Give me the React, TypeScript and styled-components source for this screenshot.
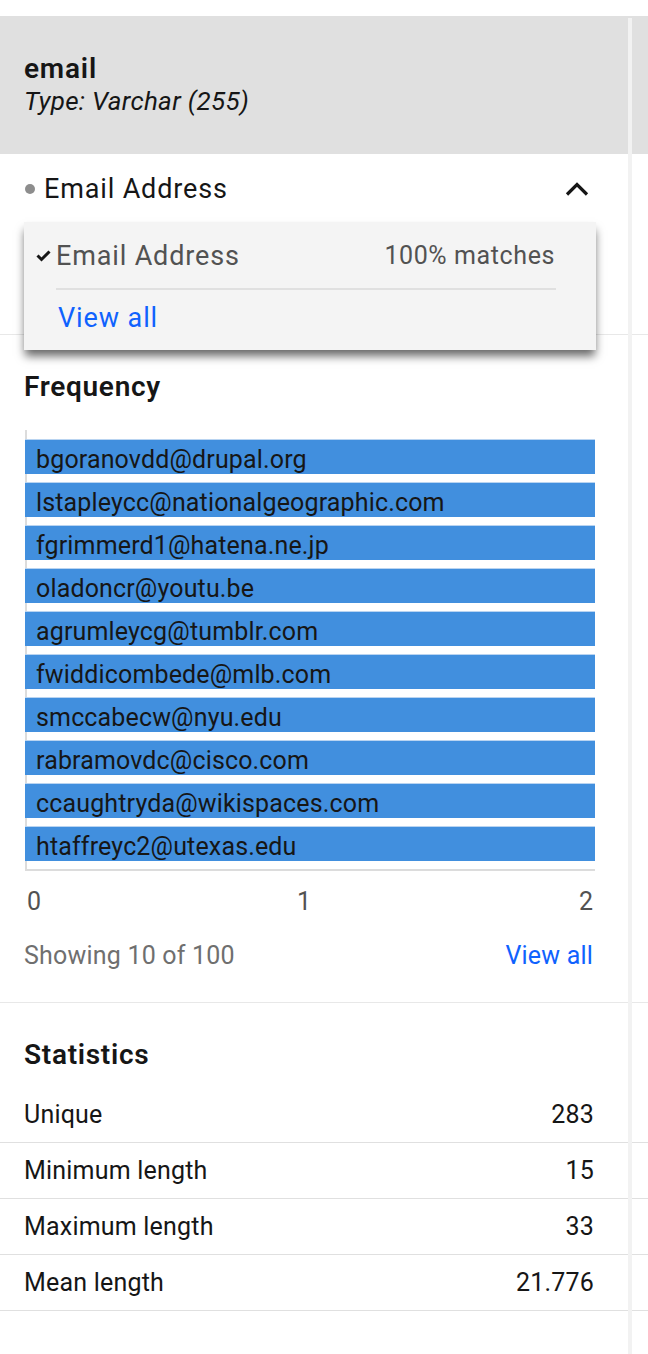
import React from "react";
import styled, { createGlobalStyle } from "styled-components";

const Global = createGlobalStyle`
  html, body { margin: 0; padding: 0; background: #ffffff; }
  body {
    font-family: Roboto, "Noto Sans", "Liberation Sans", sans-serif;
    color: #161616;
    -webkit-font-smoothing: antialiased;
  }
  * { box-sizing: border-box; }
`;

const Page = styled.div`
  position: relative;
  width: 648px;
  min-height: 1354px;
  padding-top: 16px;
`;

const ScrollTrack = styled.div`
  position: absolute;
  top: 18px;
  bottom: 0;
  left: 628px;
  width: 4px;
  background: #f2f2f2;
  z-index: 3;
`;

const Header = styled.header`
  background: #e0e0e0;
  padding: 37px 24px 36px;
`;

const ColumnName = styled.div`
  font-size: 28px;
  font-weight: 600;
  line-height: 32px;
  letter-spacing: 0.8px;
`;

const ColumnType = styled.div`
  font-size: 26px;
  font-style: italic;
  line-height: 33px;
  letter-spacing: 0.3px;
`;

const MatchSection = styled.section`
  position: relative;
  height: 181px;
  border-bottom: 1px solid #e8e8e8;
`;

const Trigger = styled.div`
  height: 68px;
  display: flex;
  align-items: center;
  padding: 2px 59px 0 24px;
`;

const Dot = styled.span`
  width: 10px;
  height: 10px;
  border-radius: 50%;
  background: #8d8d8d;
  margin-left: 1px;
  margin-right: 9px;
`;

const TriggerLabel = styled.span`
  font-size: 27px;
  line-height: 32px;
  letter-spacing: 0.85px;
  flex: 1;
`;

const Menu = styled.div`
  position: absolute;
  top: 68px;
  left: 24px;
  width: 572px;
  height: 128px;
  background: #f4f4f4;
  box-shadow: 0 7px 9px -1px rgba(0, 0, 0, 0.6);
  z-index: 2;
`;

const MenuItem = styled.div`
  height: 66px;
  display: flex;
  align-items: center;
  padding: 2px 41px 0 12px;
  color: #525252;
`;

const ItemLabel = styled.span`
  font-size: 27px;
  line-height: 32px;
  letter-spacing: 0.85px;
  margin-left: 5px;
`;

const Matches = styled.span`
  margin-left: auto;
  font-size: 25px;
  line-height: 32px;
  letter-spacing: 0.6px;
`;

const MenuDivider = styled.div`
  height: 2px;
  margin: 0 40px 0 32px;
  background: #e0e0e0;
`;

const MenuLink = styled.a`
  display: flex;
  align-items: center;
  height: 56px;
  padding-left: 34px;
  font-size: 27px;
  letter-spacing: 0.9px;
  color: #0f62fe;
  text-decoration: none;
`;

const Section = styled.section`
  padding: 36px 52px 31px 24px;
  border-bottom: 1px solid #e8e8e8;
`;

const SectionTitle = styled.h2`
  margin: 0;
  font-size: 28px;
  font-weight: 600;
  line-height: 32px;
  letter-spacing: 0.7px;
`;

const Chart = styled.div`
  margin: 27px 1px 0 1px;
  border-left: 2px solid #dcdcdc;
  border-bottom: 2px solid #dcdcdc;
  padding: 10px 0 8px;
  display: flex;
  flex-direction: column;
  gap: 9px;
`;

const Bar = styled.div`
  height: 34px;
  margin-left: -2px;
  background: #418fde;
  box-shadow: 0 -1px 0 #b9d4f1;
  padding: 6px 0 0 11px;
  font-size: 25px;
  line-height: 28px;
  letter-spacing: 0.15px;
  color: #161616;
  white-space: nowrap;
`;

const AxisLabels = styled.div`
  display: flex;
  justify-content: space-between;
  margin-top: 16px;
  padding: 0 3px;
  font-size: 25px;
  line-height: 30px;
  color: #525252;
`;

const MidTick = styled.span`
  margin-right: 12px;
`;

const FooterRow = styled.div`
  display: flex;
  justify-content: space-between;
  align-items: center;
  margin-top: 24px;
  padding-right: 3px;
  font-size: 25px;
  line-height: 30px;
  letter-spacing: 0.2px;
`;

const Muted = styled.span`
  color: #6f6f6f;
`;

const Link = styled.a`
  color: #0f62fe;
  text-decoration: none;
`;

const StatsSection = styled.section`
  padding-top: 36px;
`;

const StatsTitle = styled(SectionTitle)`
  padding-left: 24px;
  margin-bottom: 16px;
`;

const StatRow = styled.div`
  height: 56px;
  display: flex;
  align-items: center;
  justify-content: space-between;
  padding: 1px 54px 0 24px;
  border-bottom: 1px solid #e0e0e0;
  font-size: 25px;
  line-height: 30px;
  letter-spacing: 0.2px;
`;

const ChevronUp = () => (
  <svg width="24" height="14" viewBox="0 0 24 14">
    <polyline points="2,12.5 12,2.5 22,12.5" fill="none" stroke="#161616" strokeWidth="3.2" />
  </svg>
);

const Check = () => (
  <svg width="15" height="12" viewBox="0 0 15 12">
    <polyline points="1.5,5.5 5.5,9.5 13.5,1.5" fill="none" stroke="#161616" strokeWidth="3" />
  </svg>
);

const emails = [
  "bgoranovdd@drupal.org",
  "lstapleycc@nationalgeographic.com",
  "fgrimmerd1@hatena.ne.jp",
  "oladoncr@youtu.be",
  "agrumleycg@tumblr.com",
  "fwiddicombede@mlb.com",
  "smccabecw@nyu.edu",
  "rabramovdc@cisco.com",
  "ccaughtryda@wikispaces.com",
  "htaffreyc2@utexas.edu",
];

const stats: [string, string][] = [
  ["Unique", "283"],
  ["Minimum length", "15"],
  ["Maximum length", "33"],
  ["Mean length", "21.776"],
];

export default function App() {
  return (
    <Page>
      <Global />
      <ScrollTrack />
      <Header>
        <ColumnName>email</ColumnName>
        <ColumnType>Type: Varchar (255)</ColumnType>
      </Header>

      <MatchSection>
        <Trigger>
          <Dot />
          <TriggerLabel>Email Address</TriggerLabel>
          <ChevronUp />
        </Trigger>
        <Menu>
          <MenuItem>
            <Check />
            <ItemLabel>Email Address</ItemLabel>
            <Matches>100% matches</Matches>
          </MenuItem>
          <MenuDivider />
          <MenuLink href="#">View all</MenuLink>
        </Menu>
      </MatchSection>

      <Section>
        <SectionTitle>Frequency</SectionTitle>
        <Chart>
          {emails.map((e) => (
            <Bar key={e}>{e}</Bar>
          ))}
        </Chart>
        <AxisLabels>
          <span>0</span>
          <MidTick>1</MidTick>
          <span>2</span>
        </AxisLabels>
        <FooterRow>
          <Muted>Showing 10 of 100</Muted>
          <Link href="#">View all</Link>
        </FooterRow>
      </Section>

      <StatsSection>
        <StatsTitle>Statistics</StatsTitle>
        {stats.map(([k, v]) => (
          <StatRow key={k}>
            <span>{k}</span>
            <span>{v}</span>
          </StatRow>
        ))}
      </StatsSection>
    </Page>
  );
}
